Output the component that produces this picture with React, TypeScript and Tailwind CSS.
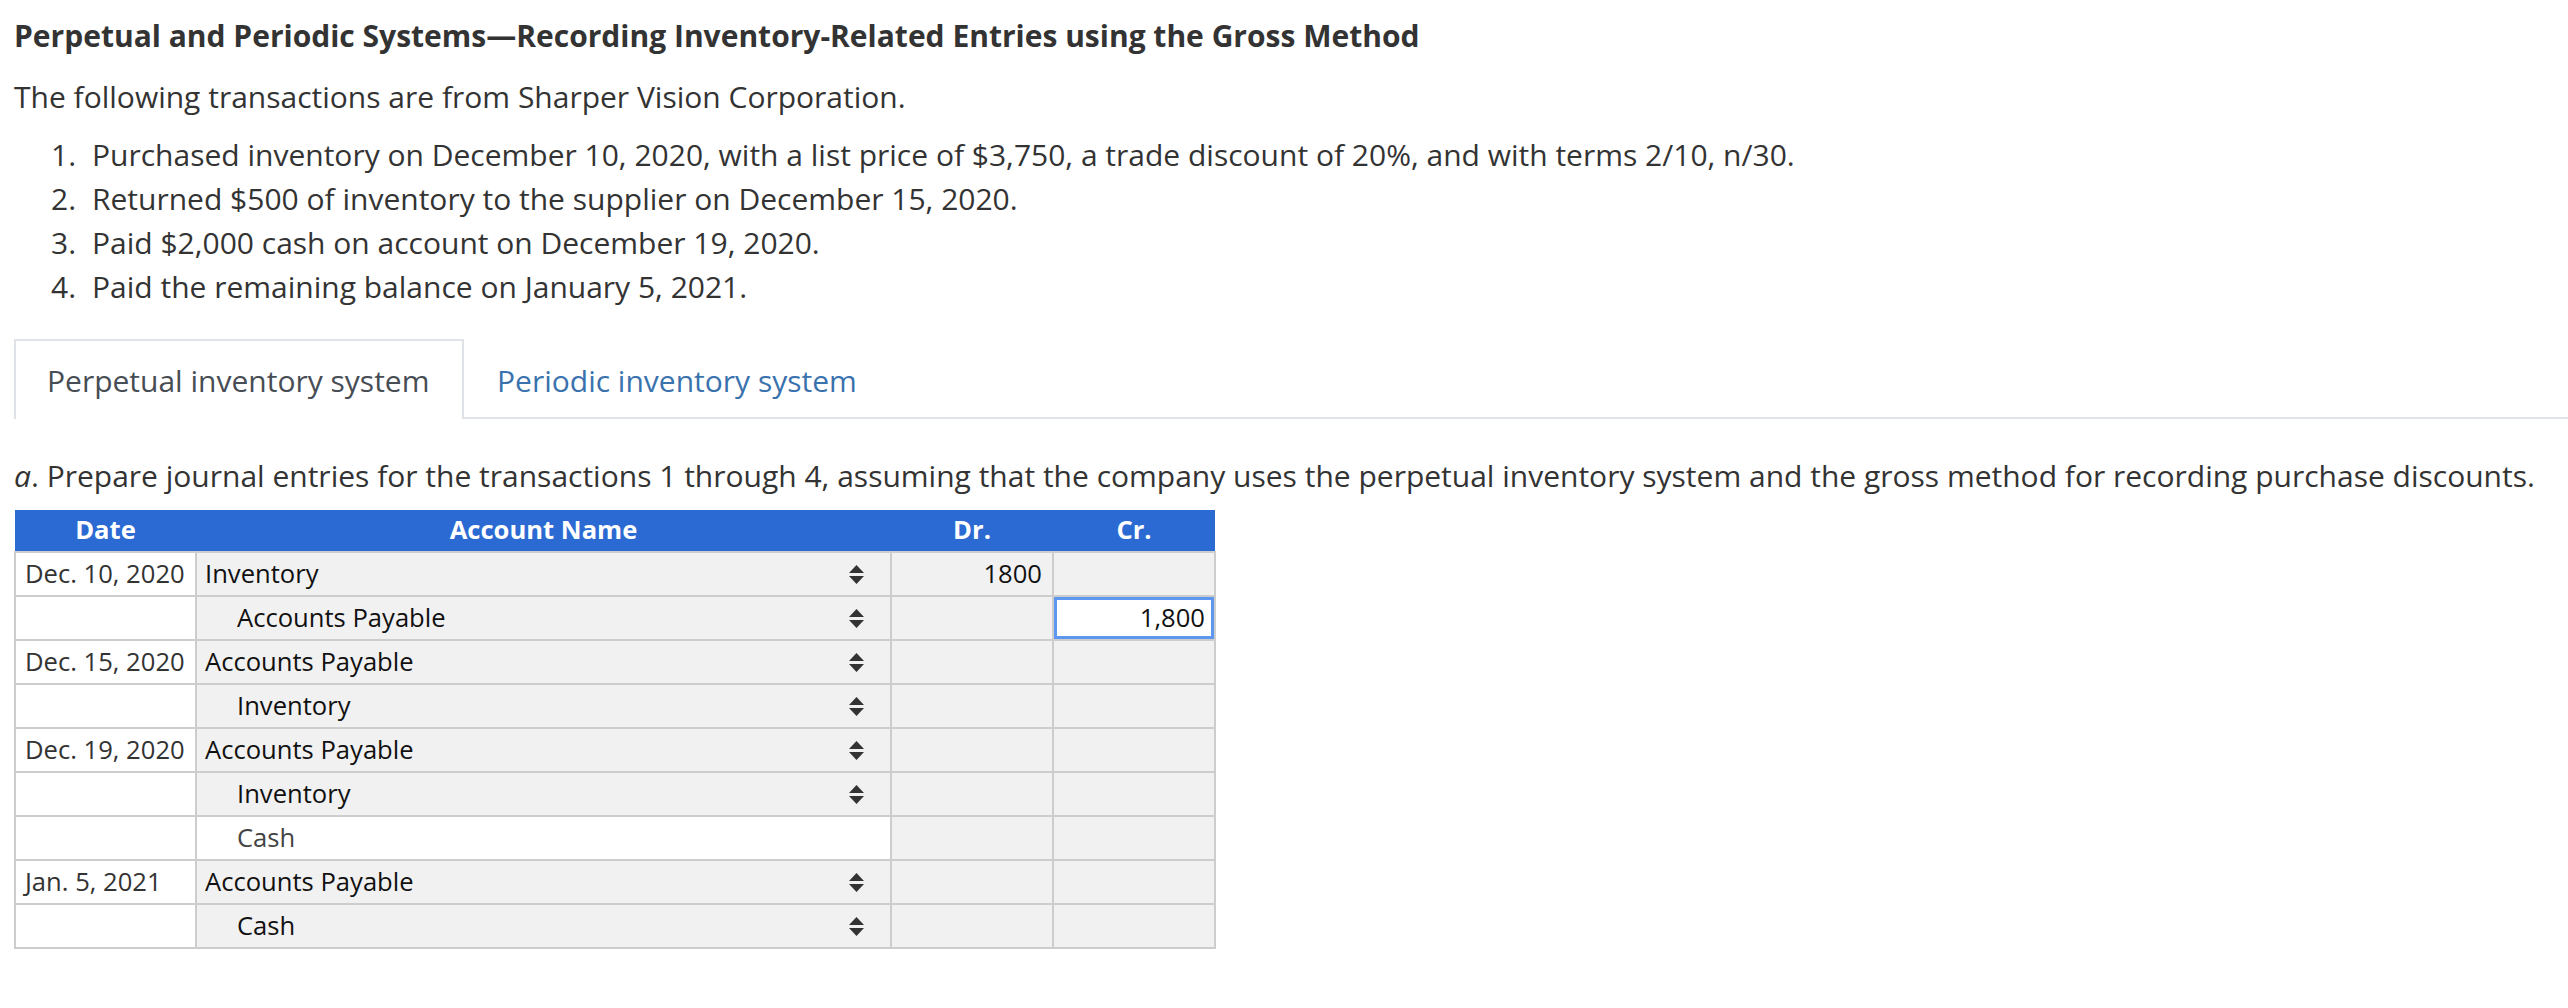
import React from 'react';

interface JournalRow {
    date: string;
    account: string;
    indent: boolean;
    select: boolean;
    dr: string;
    cr: string;
    crActive?: boolean;
}

const rows: JournalRow[] = [
    { date: 'Dec. 10, 2020', account: 'Inventory', indent: false, select: true, dr: '1800', cr: '' },
    { date: '', account: 'Accounts Payable', indent: true, select: true, dr: '', cr: '1,800', crActive: true },
    { date: 'Dec. 15, 2020', account: 'Accounts Payable', indent: false, select: true, dr: '', cr: '' },
    { date: '', account: 'Inventory', indent: true, select: true, dr: '', cr: '' },
    { date: 'Dec. 19, 2020', account: 'Accounts Payable', indent: false, select: true, dr: '', cr: '' },
    { date: '', account: 'Inventory', indent: true, select: true, dr: '', cr: '' },
    { date: '', account: 'Cash', indent: true, select: false, dr: '', cr: '' },
    { date: 'Jan. 5, 2021', account: 'Accounts Payable', indent: false, select: true, dr: '', cr: '' },
    { date: '', account: 'Cash', indent: true, select: true, dr: '', cr: '' },
];

const transactions = [
    'Purchased inventory on December 10, 2020, with a list price of $3,750, a trade discount of 20%, and with terms 2/10, n/30.',
    'Returned $500 of inventory to the supplier on December 15, 2020.',
    'Paid $2,000 cash on account on December 19, 2020.',
    'Paid the remaining balance on January 5, 2021.',
];

const SortArrows: React.FC = () => (
    <svg width="15" height="19" viewBox="0 0 15 19" className="shrink-0">
        <polygon points="7.5,0 15,8 0,8" fill="#333" />
        <polygon points="0,11 15,11 7.5,19" fill="#333" />
    </svg>
);

const App: React.FC = () => {
    return (
        <div className="min-h-screen bg-white px-[14px] pt-[14px] font-['Open_Sans',sans-serif] text-[30px] text-[#333]">
            <h1 className="font-bold leading-[44px] text-[#333]">
                Perpetual and Periodic Systems—Recording Inventory-Related Entries using the Gross Method
            </h1>
            <p className="mt-[17px] leading-[44px]">The following transactions are from Sharper Vision Corporation.</p>

            <ol className="mt-[14px]">
                {transactions.map((t, i) => (
                    <li key={i} className="flex leading-[44px]">
                        <span className="ml-[37px] w-[41px] shrink-0">{i + 1}.</span>
                        <span>{t}</span>
                    </li>
                ))}
            </ol>

            {/* tabs */}
            <div className="mt-[30px] flex border-b-2 border-[#dfe3e8] -mr-[14px]">
                <div className="-mb-[2px] w-[450px] border-2 border-b-0 border-[#dfe3e8] bg-white pl-[31px] pt-[18px] pb-[16px] leading-[44px] text-[#474d54]">
                    Perpetual inventory system
                </div>
                <div className="pl-[33px] pt-[20px] pb-[14px] leading-[44px] text-[#3a72ae]">Periodic inventory system</div>
            </div>

            <p className="mt-[35px] leading-[44px]">
                <span className="italic">a</span>. Prepare journal entries for the transactions 1 through 4, assuming that the company uses the perpetual inventory system and the gross method for recording purchase discounts.
            </p>

            <table className="mt-[12px] table-fixed border-collapse text-[25.6px]">
                <colgroup>
                    <col className="w-[181px]" />
                    <col className="w-[695px]" />
                    <col className="w-[162px]" />
                    <col className="w-[162px]" />
                </colgroup>
                <thead>
                    <tr className="h-[42px] bg-[#2b6ad2] font-bold text-white">
                        <th className="p-0 text-center font-bold">Date</th>
                        <th className="p-0 text-center font-bold">Account Name</th>
                        <th className="p-0 text-center font-bold">Dr.</th>
                        <th className="p-0 text-center font-bold">Cr.</th>
                    </tr>
                </thead>
                <tbody>
                    {rows.map((r, i) => (
                        <tr key={i} className="h-[44px]">
                            <td className="border-2 border-[#cdcdcd] bg-white pl-[9px] text-left leading-[40px] text-[#333]">
                                {r.date}
                            </td>
                            <td className={`border-2 border-[#cdcdcd] p-0 ${r.select ? 'bg-[#f1f1f1] text-[#111]' : 'bg-white text-[#444]'}`}>
                                <div className={`flex items-center justify-between pr-[26px] leading-[40px] ${r.indent ? 'pl-[40px]' : 'pl-[8px]'}`}>
                                    <span>{r.account}</span>
                                    {r.select && <SortArrows />}
                                </div>
                            </td>
                            <td className="border-2 border-[#cdcdcd] bg-[#f1f1f1] pr-[10px] text-right leading-[40px] text-[#111]">
                                {r.dr}
                            </td>
                            <td className="border-2 border-[#cdcdcd] bg-[#f1f1f1] p-0 text-right text-[#111]">
                                {r.crActive ? (
                                    <div className="h-[42px] border-[3px] border-[#5e97ef] bg-white pr-[6px] leading-[36px]">{r.cr}</div>
                                ) : (
                                    <div className="pr-[10px] leading-[40px]">{r.cr}</div>
                                )}
                            </td>
                        </tr>
                    ))}
                </tbody>
            </table>
        </div>
    );
};

export default App;
